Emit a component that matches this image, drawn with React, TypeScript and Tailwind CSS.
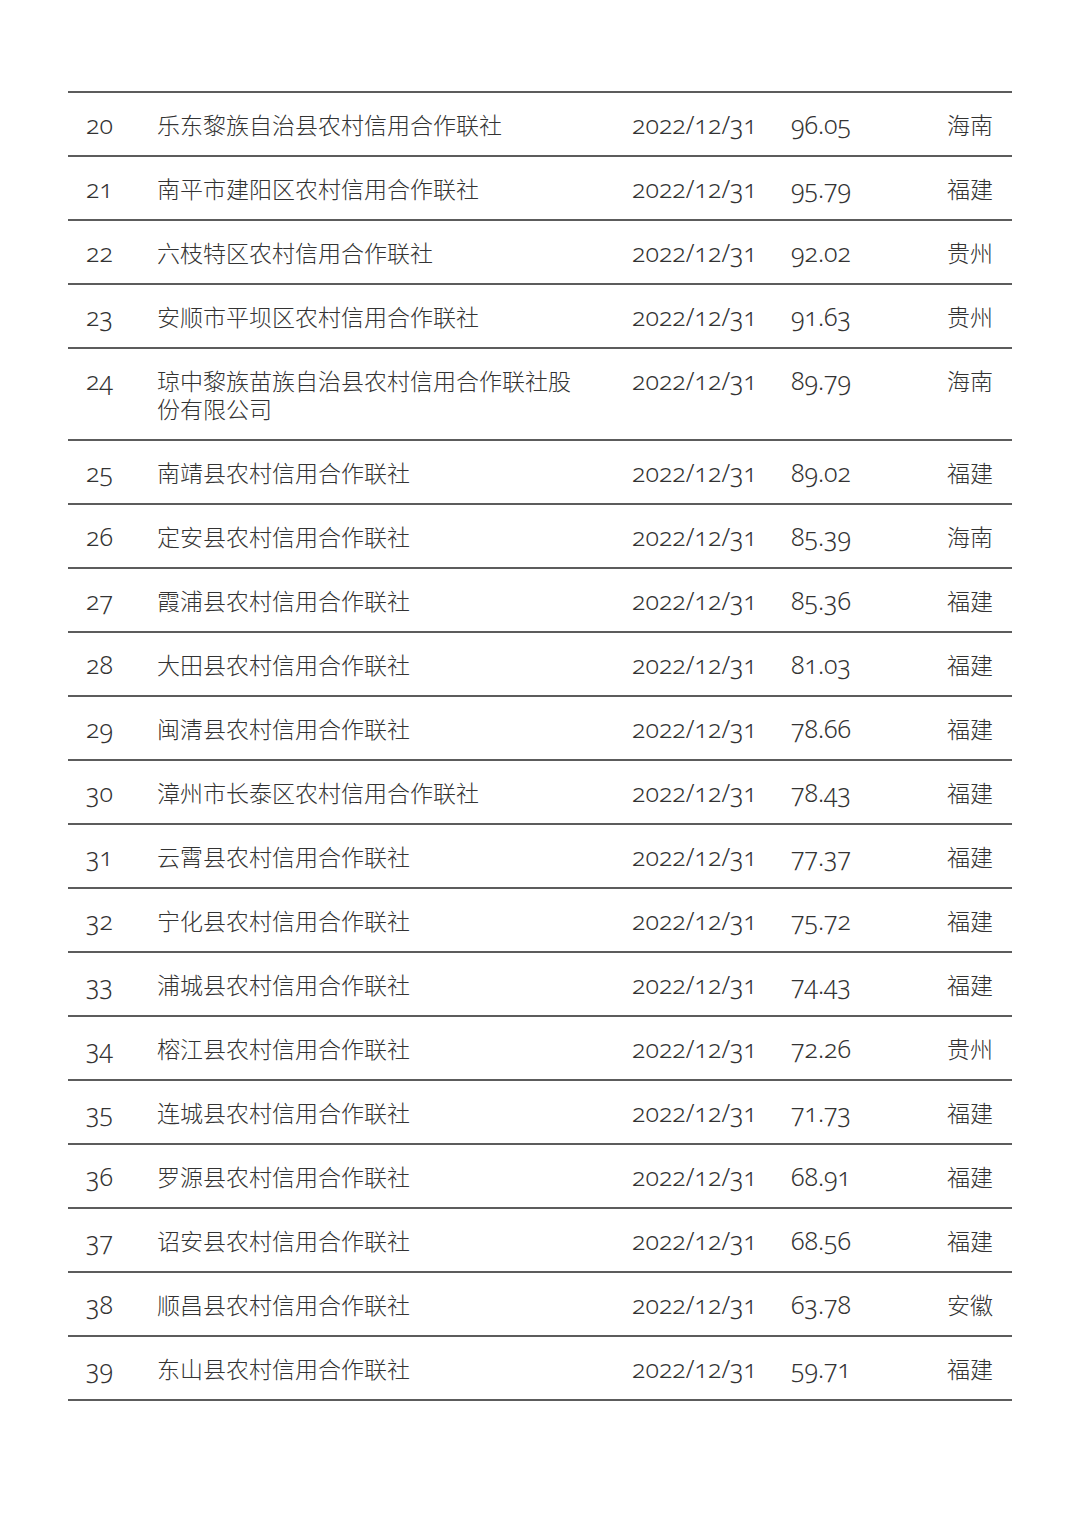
import React from "react";

type Row = { n: string; name: string; v: string; p: string };

const rows: Row[] = [
  { n: "20", name: "乐东黎族自治县农村信用合作联社", v: "96.05", p: "海南" },
  { n: "21", name: "南平市建阳区农村信用合作联社", v: "95.79", p: "福建" },
  { n: "22", name: "六枝特区农村信用合作联社", v: "92.02", p: "贵州" },
  { n: "23", name: "安顺市平坝区农村信用合作联社", v: "91.63", p: "贵州" },
  { n: "24", name: "琼中黎族苗族自治县农村信用合作联社股份有限公司", v: "89.79", p: "海南" },
  { n: "25", name: "南靖县农村信用合作联社", v: "89.02", p: "福建" },
  { n: "26", name: "定安县农村信用合作联社", v: "85.39", p: "海南" },
  { n: "27", name: "霞浦县农村信用合作联社", v: "85.36", p: "福建" },
  { n: "28", name: "大田县农村信用合作联社", v: "81.03", p: "福建" },
  { n: "29", name: "闽清县农村信用合作联社", v: "78.66", p: "福建" },
  { n: "30", name: "漳州市长泰区农村信用合作联社", v: "78.43", p: "福建" },
  { n: "31", name: "云霄县农村信用合作联社", v: "77.37", p: "福建" },
  { n: "32", name: "宁化县农村信用合作联社", v: "75.72", p: "福建" },
  { n: "33", name: "浦城县农村信用合作联社", v: "74.43", p: "福建" },
  { n: "34", name: "榕江县农村信用合作联社", v: "72.26", p: "贵州" },
  { n: "35", name: "连城县农村信用合作联社", v: "71.73", p: "福建" },
  { n: "36", name: "罗源县农村信用合作联社", v: "68.91", p: "福建" },
  { n: "37", name: "诏安县农村信用合作联社", v: "68.56", p: "福建" },
  { n: "38", name: "顺昌县农村信用合作联社", v: "63.78", p: "安徽" },
  { n: "39", name: "东山县农村信用合作联社", v: "59.71", p: "福建" },
];

const num = "font-['Noto_Sans','Noto_Sans_CJK_SC',sans-serif] [font-variant-numeric:oldstyle-nums] text-[25px] font-light";
const cjk = "font-['Noto_Sans_CJK_SC',sans-serif] text-[23px] font-light";

export default function App() {
  return (
    <div className="w-[1080px] h-[1528px] bg-white pt-[91px] text-[#333333]">
      <div className="ml-[68px] w-[944px] border-t-2 border-[#5c5c5c]">
        {rows.map((r) => (
          <div
            key={r.n}
            className="grid grid-cols-[89px_475px_159px_1fr_auto] items-start border-b-2 border-[#5c5c5c] pt-[17px] pb-[17px] leading-[28px]"
          >
            <div className={`pl-[18px] ${num}`}>{r.n}</div>
            <div className={`w-[428px] ${cjk}`}>{r.name}</div>
            <div className={num}>2022/12/31</div>
            <div className={num}>{r.v}</div>
            <div className={`pr-[19px] ${cjk}`}>{r.p}</div>
          </div>
        ))}
      </div>
    </div>
  );
}
